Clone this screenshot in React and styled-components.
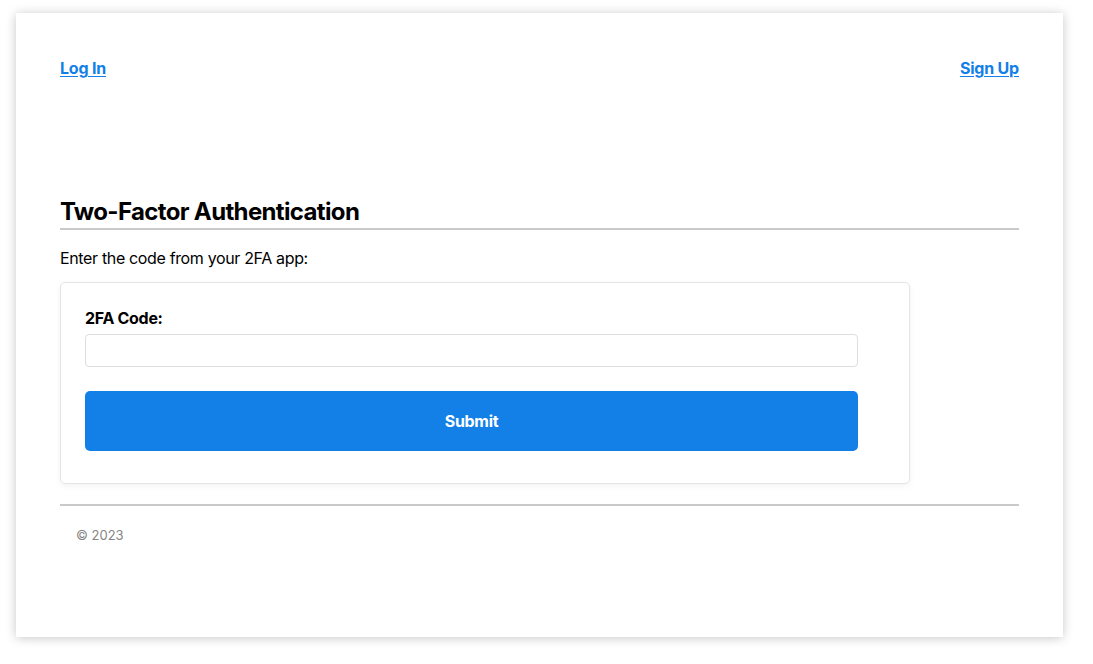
import React from "react";
import styled, { createGlobalStyle } from "styled-components";

const GlobalStyle = createGlobalStyle`
  body {
    margin: 0;
    background: #ffffff;
    font-family: Inter, "Noto Sans", "Liberation Sans", sans-serif;
    color: #000;
  }
`;

const Page = styled.div`
  padding: 13px 0 27px 16px;
`;

const Frame = styled.div`
  width: 1047px;
  height: 624px;
  box-sizing: border-box;
  background: #fff;
  box-shadow: 0 1px 10px rgba(0, 0, 0, 0.22);
  padding: 46px 44px 0 44px;
  display: flex;
  flex-direction: column;
`;

const TopNav = styled.nav`
  display: flex;
  justify-content: space-between;
  align-items: center;
  height: 19px;
`;

const NavLink = styled.a`
  color: #1380e8;
  font-size: 16px;
  font-weight: 700;
  line-height: 19px;
  letter-spacing: -0.2px;
  text-decoration: underline;
  text-underline-offset: 2px;
  cursor: pointer;
`;

const Title = styled.h1`
  margin: 119px 0 0 0;
  font-size: 24px;
  font-weight: 700;
  line-height: 29px;
  letter-spacing: -0.65px;
  padding-bottom: 2px;
  border-bottom: 2px solid #c9c9c9;
`;

const Intro = styled.p`
  margin: 19px 0 0 0;
  font-size: 16px;
  line-height: 19px;
  letter-spacing: -0.35px;
`;

const Card = styled.form`
  margin-top: 14px;
  width: 850px;
  box-sizing: border-box;
  border: 1px solid #e4e4e4;
  border-radius: 5px;
  box-shadow: 0 2px 6px rgba(0, 0, 0, 0.05);
  padding: 26px 51px 32px 24px;
  display: flex;
  flex-direction: column;
`;

const Label = styled.label`
  font-size: 16px;
  font-weight: 700;
  line-height: 19px;
  letter-spacing: -0.3px;
`;

const Input = styled.input`
  margin-top: 6px;
  height: 33px;
  box-sizing: border-box;
  border: 1px solid #dedede;
  border-radius: 4px;
  font-size: 16px;
  padding: 0 8px;
  outline: none;
`;

const SubmitButton = styled.button`
  margin-top: 24px;
  height: 60px;
  border: none;
  border-radius: 5px;
  background: #1380e8;
  color: #fff;
  font-family: inherit;
  font-size: 16px;
  font-weight: 700;
  letter-spacing: -0.3px;
  cursor: pointer;
`;

const Footer = styled.footer`
  margin-top: 20px;
  border-top: 2px solid #c9c9c9;
  padding: 21px 16px;
  font-size: 13px;
  line-height: 16px;
  color: #858585;
`;

export default function App() {
  return (
    <>
      <GlobalStyle />
      <Page>
        <Frame>
          <TopNav>
            <NavLink>Log In</NavLink>
            <NavLink>Sign Up</NavLink>
          </TopNav>
          <Title>Two-Factor Authentication</Title>
          <Intro>Enter the code from your 2FA app:</Intro>
          <Card onSubmit={(e) => e.preventDefault()}>
            <Label htmlFor="code">2FA Code:</Label>
            <Input id="code" type="text" />
            <SubmitButton type="submit">Submit</SubmitButton>
          </Card>
          <Footer>© 2023</Footer>
        </Frame>
      </Page>
    </>
  );
}
